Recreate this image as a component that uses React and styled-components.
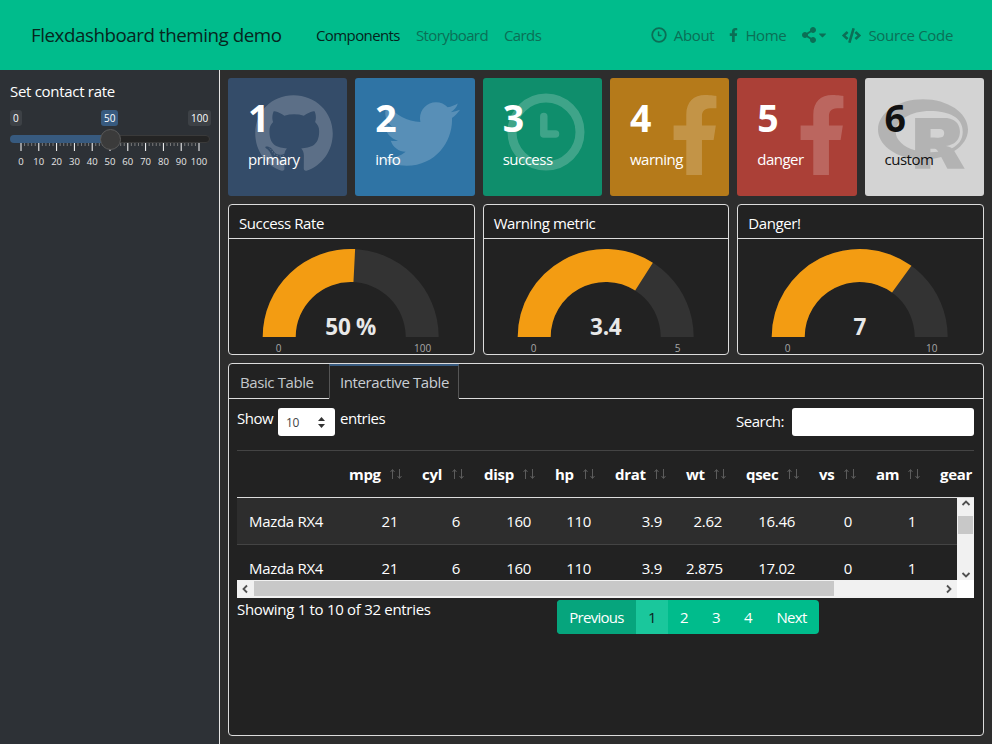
import React from "react";
import styled, { createGlobalStyle } from "styled-components";
import { FaGithub, FaTwitter, FaFacebookF, FaShareAlt, FaCode, FaRProject, FaCaretDown } from "react-icons/fa";

const GlobalStyle = createGlobalStyle`
  html, body { margin: 0; height: 100%; background: #2d2d2d; }
  body { font-family: "Open Sans", "Noto Sans", sans-serif; font-size: 15px; letter-spacing: -0.3px; color: #fff; }
  * { box-sizing: border-box; }
`;

const Page = styled.div`
  width: 992px;
  height: 744px;
  display: flex;
  flex-direction: column;
  overflow: hidden;
`;

const Navbar = styled.header`
  height: 70px;
  flex: none;
  background: #00bc8c;
  display: flex;
  align-items: center;
  padding: 0 39px 0 31px;
`;

const Brand = styled.div`
  font-size: 18.75px;
  letter-spacing: -0.45px;
  line-height: 24px;
  margin-top: -1px;
  color: #07261e;
  width: 285px;
`;

const NavGroup = styled.nav`
  display: flex;
  align-items: center;
  gap: ${(p) => (p.$right ? 15 : 16)}px;
  margin-left: ${(p) => (p.$right ? "auto" : "0")};
`;

const NavLink = styled.span`
  display: flex;
  align-items: center;
  gap: 7px;
  font-size: 15px;
  letter-spacing: -0.33px;
  color: ${(p) => (p.$active ? "#06241c" : "#0b6f56")};
`;

const TabLink = styled(NavLink)`
  letter-spacing: -0.6px;
`;

const NavF = styled(FaFacebookF)`
  width: 9px;
  height: 14px;
`;

const NavCaret = styled(FaCaretDown)`
  margin-left: -6px;
  width: 9px;
  height: 12px;
`;

const Body = styled.div`
  flex: 1;
  display: flex;
  min-height: 0;
`;

const Sidebar = styled.aside`
  width: 220px;
  flex: none;
  background: #2d3136;
  border-right: 1px solid #e6e6e6;
  padding: 13px 10px;
`;

const SliderLabel = styled.div`
  font-size: 15px;
  line-height: 16px;
  color: #fff;
`;

const Slider = styled.div`
  position: relative;
  width: 200px;
  height: 60px;
  margin-top: 11px;
`;

const SliderBadge = styled.span`
  position: absolute;
  top: 0;
  left: ${(p) => p.$left}px;
  height: 16px;
  padding: 0 3px;
  border-radius: 3px;
  font-size: 10px;
  line-height: 16px;
  letter-spacing: 0;
  background: ${(p) => (p.$on ? "#375a7f" : "#3d4146")};
  color: #fff;
`;

const SliderTrack = styled.div`
  position: absolute;
  top: 25px;
  left: 0;
  width: 200px;
  height: 8px;
  border-radius: 4px;
  border: 1px solid #3a3a3a;
  background: #242424;
`;

const SliderFill = styled.div`
  position: absolute;
  top: 25px;
  left: 0;
  width: 100px;
  height: 8px;
  border-radius: 4px 0 0 4px;
  background: #375a7f;
`;

const SliderHandle = styled.div`
  position: absolute;
  top: 19px;
  left: 90px;
  width: 21px;
  height: 21px;
  border-radius: 50%;
  background: #3b3b3b;
  border: 1px solid #5a5a5a;
`;

const TickSvg = styled.svg`
  position: absolute;
  top: 33px;
  left: 0;
`;

const ContentArea = styled.main`
  flex: 1;
  min-width: 0;
  padding: 8px;
  display: flex;
  flex-direction: column;
  gap: 8px;
`;

const BoxRow = styled.section`
  display: grid;
  grid-template-columns: repeat(6, 1fr);
  gap: 7.9px;
  height: 118px;
  flex: none;
`;

const ValueBox = styled.div`
  position: relative;
  overflow: hidden;
  background: ${(p) => p.$bg};
  color: ${(p) => p.$fg || "#fff"};
  border-radius: 3px;
  padding: 15px 20px;
`;

const BoxNumber = styled.div`
  font-size: 37.5px;
  line-height: 50px;
  font-weight: 700;
  letter-spacing: 0;
  position: relative;
`;

const BoxCaption = styled.div`
  font-size: 15px;
  letter-spacing: -0.5px;
  line-height: 20px;
  margin-top: 6px;
  position: relative;
`;

const BoxIcon = styled.div`
  position: absolute;
  top: ${(p) => p.$top}px;
  left: ${(p) => p.$left}px;
  line-height: 0;
  color: ${(p) => p.$color || "rgba(255,255,255,0.2)"};
`;

const GaugeRow = styled.section`
  display: grid;
  grid-template-columns: repeat(3, 1fr);
  gap: 8px;
  height: 151px;
  flex: none;
`;

const Card = styled.article`
  background: #222;
  border: 1px solid #dcdcdc;
  border-radius: 4px;
  display: flex;
  flex-direction: column;
  min-width: 0;
`;

const CardTitle = styled.div`
  height: 34px;
  flex: none;
  border-bottom: 1px solid #dcdcdc;
  padding: 0 10px;
  font-size: 15px;
  letter-spacing: -0.4px;
  line-height: 37px;
`;

const TabCard = styled(Card)`
  flex: 1;
  min-height: 0;
`;

const TabBar = styled.div`
  height: 35px;
  flex: none;
  display: flex;
  border-bottom: 1px solid #dcdcdc;
`;

const Tab = styled.div`
  height: 35px;
  width: ${(p) => (p.$active ? 130 : 100)}px;
  padding-left: ${(p) => (p.$active ? 10 : 11)}px;
  font-size: 15px;
  line-height: 37px;
  letter-spacing: -0.4px;
  color: ${(p) => (p.$active ? "#c9ced4" : "#c4c8cc")};
  ${(p) =>
    p.$active &&
    `background:#222;border-top:2px solid #375a7f;border-left:1px solid #555;border-right:1px solid #555;border-bottom:1px solid #222;line-height:33px;`}
`;

const TableWrap = styled.div`
  padding: 9px 9px 0 8px;
  flex: 1;
  min-height: 0;
`;

const TableControls = styled.div`
  height: 43px;
  display: flex;
  justify-content: space-between;
  border-bottom: 1px solid #444;
`;

const ControlGroup = styled.div`
  display: flex;
  align-items: flex-start;
  gap: ${(p) => p.$gap}px;
  font-size: 15px;
  letter-spacing: -0.5px;
  line-height: ${(p) => p.$line}px;
`;

const SelectBox = styled.div`
  width: 57px;
  height: 28px;
  background: #fff;
  border-radius: 3px;
  color: #444;
  font-size: 12px;
  line-height: 30px;
  padding-left: 8px;
  position: relative;
`;

const SelectArrows = styled.svg`
  position: absolute;
  right: 9px;
  top: 8px;
`;

const SearchInput = styled.div`
  width: 182px;
  height: 28px;
  background: #fff;
  border-radius: 3px;
`;

const HeadClip = styled.div`
  height: 47px;
  overflow: hidden;
  border-bottom: 1px solid #dcdcdc;
`;

const columns = "100px 73px 62px 71px 60px 71px 60px 73px 57px 64px 80px";

const HeadRow = styled.div`
  display: grid;
  grid-template-columns: ${columns};
  height: 46px;
  align-items: center;
`;

const HeadCell = styled.div`
  display: flex;
  justify-content: space-between;
  align-items: center;
  padding: 0 7px 0 12px;
  font-weight: 700;
  font-size: 15px;
`;

const SortGlyph = styled.svg`
  flex: none;
`;

const ScrollFrame = styled.div`
  display: grid;
  grid-template-columns: 1fr 17px;
  grid-template-rows: 82px 18px;
`;

const RowsClip = styled.div`
  overflow: hidden;
`;

const DataRow = styled.div`
  display: grid;
  grid-template-columns: ${columns};
  height: 47px;
  align-items: center;
  background: ${(p) => (p.$odd ? "#2d2d2d" : "#222")};
  border-bottom: 1px solid #444;
`;

const DataCell = styled.div`
  padding: 0 12px;
  font-size: 15px;
  text-align: ${(p) => (p.$left ? "left" : "right")};
`;

const VBar = styled.div`
  background: #f1f1f1;
  display: flex;
  flex-direction: column;
  align-items: center;
  justify-content: space-between;
  position: relative;
`;

const VThumb = styled.div`
  position: absolute;
  top: 18px;
  left: 1px;
  width: 15px;
  height: 18px;
  background: #c8c8c8;
`;

const HBar = styled.div`
  background: #f1f1f1;
  display: flex;
  align-items: center;
  justify-content: space-between;
  position: relative;
  padding: 0 3px;
`;

const HThumb = styled.div`
  position: absolute;
  left: 17px;
  top: 1px;
  width: 580px;
  height: 15px;
  background: #c8c8c8;
`;

const Corner = styled.div`
  background: #fff;
`;

const TableFooter = styled.div`
  display: flex;
  margin-top: 2px;
`;

const InfoText = styled.div`
  width: 320px;
  font-size: 15px;
  line-height: 18px;
`;

const Pager = styled.div`
  display: flex;
  height: 34px;
  border-radius: 4px;
  overflow: hidden;
  background: #00bc8c;
`;

const PageItem = styled.div`
  width: ${(p) => p.$w}px;
  text-align: center;
  font-size: 15px;
  letter-spacing: -0.7px;
  line-height: 34px;
  color: ${(p) => (p.$active ? "#0b241d" : "#fff")};
  background: ${(p) => (p.$active ? "#1ac79c" : p.$muted ? "#06a57d" : "transparent")};
`;

// clock with an L shaped hand, the react-icons one has a diagonal hand
const ClockIcon = ({ size }) => (
  <svg width={size} height={size} viewBox="-40 -40 80 80">
    <circle r="34" fill="none" stroke="currentColor" strokeWidth="9" />
    <path d="M-2.2 -15.5V2H9.5" fill="none" stroke="currentColor" strokeWidth="7.5" strokeLinecap="round" strokeLinejoin="round" />
  </svg>
);

const boxes = [
  { n: 1, label: "primary", bg: "#344c69", Icon: FaGithub, size: 80, top: 16, left: 26 },
  { n: 2, label: "info", bg: "#2f74a5", Icon: FaTwitter, size: 78, top: 17, left: 27 },
  { n: 3, label: "success", bg: "#0f8e6c", Icon: ClockIcon, size: 80, top: 14, left: 23 },
  { n: 4, label: "warning", bg: "#b57a1a", Icon: FaFacebookF, size: 80, top: 17, left: 45 },
  { n: 5, label: "danger", bg: "#ab4037", Icon: FaFacebookF, size: 80, top: 17, left: 45 },
  { n: 6, label: "custom", bg: "#d3d3d3", fg: "#111", Icon: FaRProject, size: 90, top: 11, left: 13, color: "rgba(0,0,0,0.15)" },
];

const gauges = [
  { title: "Success Rate", value: "50 %", frac: 0.516, max: "100" },
  { title: "Warning metric", value: "3.4", frac: 0.68, max: "5" },
  { title: "Danger!", value: "7", frac: 0.7, max: "10" },
];

const headers = ["mpg", "cyl", "disp", "hp", "drat", "wt", "qsec", "vs", "am"];
const rows = [
  ["Mazda RX4", "21", "6", "160", "110", "3.9", "2.62", "16.46", "0", "1"],
  ["Mazda RX4", "21", "6", "160", "110", "3.9", "2.875", "17.02", "0", "1"],
];

function arcPath(cx, cy, outer, inner, from, to) {
  const pt = (r, f) => {
    const a = Math.PI * (1 - f);
    return [cx + r * Math.cos(a), cy - r * Math.sin(a)];
  };
  const [x1, y1] = pt(outer, from);
  const [x2, y2] = pt(outer, to);
  const [x3, y3] = pt(inner, to);
  const [x4, y4] = pt(inner, from);
  return `M${x1} ${y1}A${outer} ${outer} 0 0 1 ${x2} ${y2}L${x3} ${y3}A${inner} ${inner} 0 0 0 ${x4} ${y4}Z`;
}

function Gauge({ frac, value, max }) {
  const cx = 121.7;
  const cy = 98;
  return (
    <svg width="244" height="115" style={{ display: "block" }}>
      <path d={arcPath(cx, cy, 88, 55, 0, 1)} fill="#333" />
      <path d={arcPath(cx, cy, 88, 55, 0, frac)} fill="#f39c12" />
      <text x={cx} y={cy - 2} textAnchor="middle" fontSize="22.5" fontWeight="700" fill="#e8e8e8">{value}</text>
      <text x={cx - 72} y={cy + 15} textAnchor="middle" fontSize="10" letterSpacing="0" fill="#a8a8a8">0</text>
      <text x={cx + 72} y={cy + 15} textAnchor="middle" fontSize="10" letterSpacing="0" fill="#a8a8a8">{max}</text>
    </svg>
  );
}

function SliderTicks() {
  const ticks = [];
  for (let i = 0; i <= 50; i++) {
    const x = 11 + (i * 178) / 50;
    ticks.push(<line key={i} x1={x} x2={x} y1="0" y2={i % 5 === 0 ? 8 : 3} stroke={i % 5 === 0 ? "#fff" : "#7a7a7a"} />);
  }
  const labels = [];
  for (let i = 0; i <= 10; i++) {
    labels.push(
      <text key={i} x={11 + i * 17.8} y="22" textAnchor="middle" fontSize="9.5" letterSpacing="0" fill="#e6e6e6">{i * 10}</text>
    );
  }
  return (
    <TickSvg width="200" height="28">
      {ticks}
      {labels}
    </TickSvg>
  );
}

const Chevron = ({ d }) => (
  <svg width="10" height="10" viewBox="0 0 10 10">
    <path d={d} fill="none" stroke="#505050" strokeWidth="1.8" />
  </svg>
);

export default function App() {
  return (
    <Page>
      <GlobalStyle />
      <Navbar>
        <Brand>Flexdashboard theming demo</Brand>
        <NavGroup>
          <TabLink $active>Components</TabLink>
          <TabLink>Storyboard</TabLink>
          <TabLink>Cards</TabLink>
        </NavGroup>
        <NavGroup $right>
          <NavLink><ClockIcon size={16} />About</NavLink>
          <NavLink><NavF />Home</NavLink>
          <NavLink><FaShareAlt size={16} /><NavCaret /></NavLink>
          <NavLink><FaCode size={19} />Source Code</NavLink>
        </NavGroup>
      </Navbar>
      <Body>
        <Sidebar>
          <SliderLabel>Set contact rate</SliderLabel>
          <Slider>
            <SliderBadge $left={0}>0</SliderBadge>
            <SliderBadge $left={91} $on>50</SliderBadge>
            <SliderBadge $left={178}>100</SliderBadge>
            <SliderTrack />
            <SliderFill />
            <SliderTicks />
            <SliderHandle />
          </Slider>
        </Sidebar>
        <ContentArea>
          <BoxRow>
            {boxes.map((b) => (
              <ValueBox key={b.n} $bg={b.bg} $fg={b.fg}>
                <BoxIcon $top={b.top} $left={b.left} $color={b.color}><b.Icon size={b.size} /></BoxIcon>
                <BoxNumber>{b.n}</BoxNumber>
                <BoxCaption>{b.label}</BoxCaption>
              </ValueBox>
            ))}
          </BoxRow>
          <GaugeRow>
            {gauges.map((g) => (
              <Card key={g.title}>
                <CardTitle>{g.title}</CardTitle>
                <Gauge frac={g.frac} value={g.value} max={g.max} />
              </Card>
            ))}
          </GaugeRow>
          <TabCard>
            <TabBar>
              <Tab>Basic Table</Tab>
              <Tab $active>Interactive Table</Tab>
            </TabBar>
            <TableWrap>
              <TableControls>
                <ControlGroup $gap={5} $line={20}>
                  Show
                  <SelectBox>
                    10
                    <SelectArrows width="9" height="13" viewBox="0 0 9 13">
                      <path d="M4.5 1L8 5H1ZM4.5 12L1 8H8Z" fill="#333" />
                    </SelectArrows>
                  </SelectBox>
                  entries
                </ControlGroup>
                <ControlGroup $gap={8} $line={26}>
                  Search:
                  <SearchInput />
                </ControlGroup>
              </TableControls>
              <HeadClip>
                <HeadRow>
                  <HeadCell />
                  {headers.map((h) => (
                    <HeadCell key={h}>
                      {h}
                      <SortGlyph width="14" height="12" viewBox="0 0 14 12">
                        <path d="M3.5 11V2M1.5 4L3.5 1.5L5.5 4M10.5 1V10M8.5 8L10.5 10.5L12.5 8" fill="none" stroke="#5c5c5c" />
                      </SortGlyph>
                    </HeadCell>
                  ))}
                  <HeadCell>gear</HeadCell>
                </HeadRow>
              </HeadClip>
              <ScrollFrame>
                <RowsClip>
                  {rows.map((r, i) => (
                    <DataRow key={r[7]} $odd={i === 0}>
                      {r.map((c, j) => (
                        <DataCell key={j} $left={j === 0}>{c}</DataCell>
                      ))}
                    </DataRow>
                  ))}
                </RowsClip>
                <VBar>
                  <Chevron d="M1.5 7L5 3.5L8.5 7" />
                  <VThumb />
                  <Chevron d="M1.5 3L5 6.5L8.5 3" />
                </VBar>
                <HBar>
                  <Chevron d="M7 1.5L3.5 5L7 8.5" />
                  <HThumb />
                  <Chevron d="M3 1.5L6.5 5L3 8.5" />
                </HBar>
                <Corner />
              </ScrollFrame>
              <TableFooter>
                <InfoText>Showing 1 to 10 of 32 entries</InfoText>
                <Pager>
                  <PageItem $muted $w={79}>Previous</PageItem>
                  <PageItem $active $w={32}>1</PageItem>
                  <PageItem $w={32}>2</PageItem>
                  <PageItem $w={32}>3</PageItem>
                  <PageItem $w={32}>4</PageItem>
                  <PageItem $w={55}>Next</PageItem>
                </Pager>
              </TableFooter>
            </TableWrap>
          </TabCard>
        </ContentArea>
      </Body>
    </Page>
  );
}
